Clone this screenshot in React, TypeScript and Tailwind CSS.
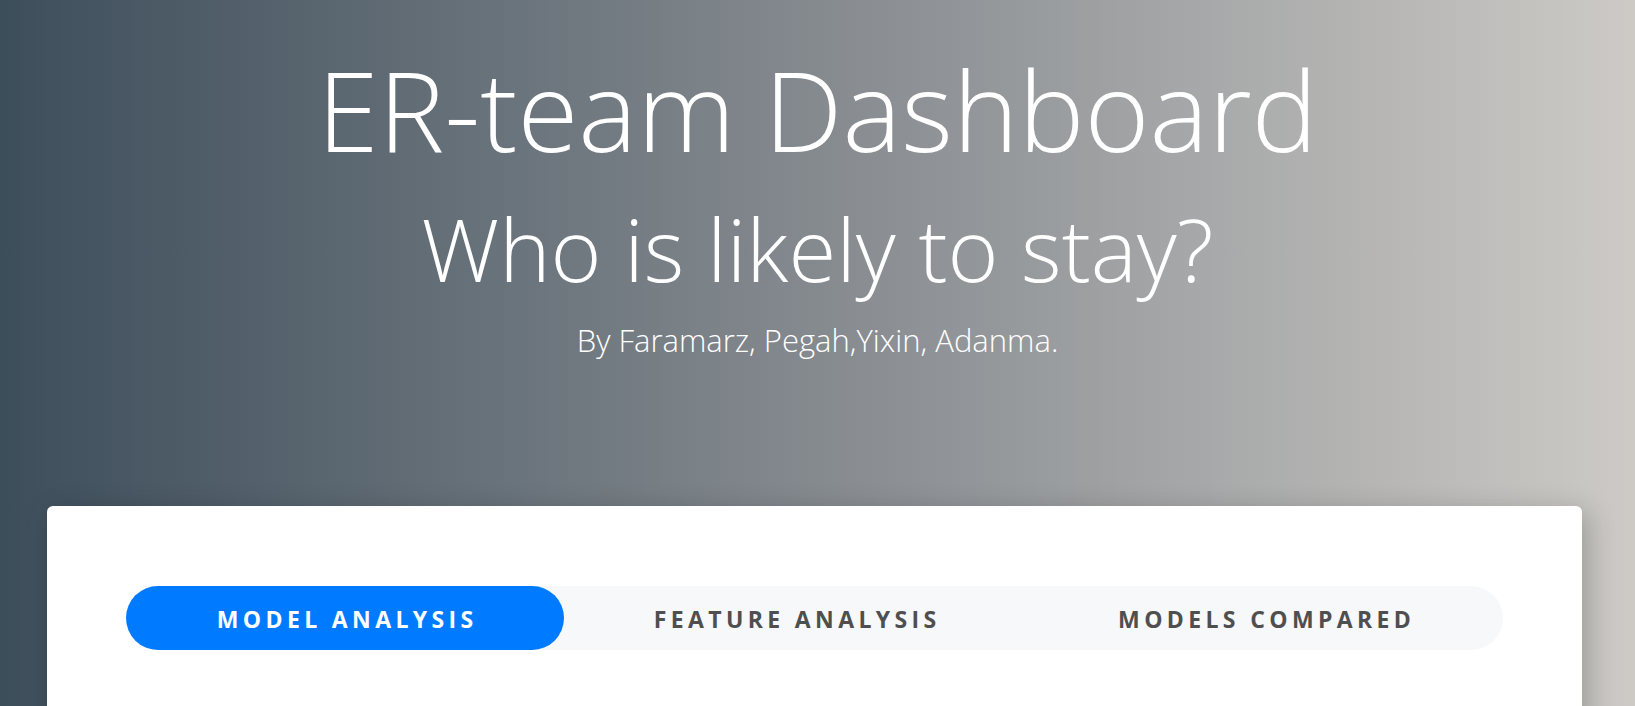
const tabs = [
  { label: 'Model Analysis', width: 'w-[438px]', active: true },
  { label: 'Feature Analysis', width: 'w-[462px]', active: false },
  { label: 'Models Compared', width: 'flex-1', active: false },
]

export default function App() {
  return (
    <div
      className="min-h-[706px] bg-[linear-gradient(to_right,#3d4e5b_0%,#858a8f_50%,#cdcac6_100%)] text-white"
      style={{ fontFamily: '"Open Sans", "Noto Sans", sans-serif' }}
    >
      <header className="flex flex-col items-center pt-[54px] text-center font-light">
        <h1 className="text-[111px] leading-[111px] font-light">ER-team Dashboard</h1>
        <h2 className="mt-[39px] text-[87px] leading-[88px] font-light">Who is likely to stay?</h2>
        <p className="mt-[28px] text-[31px] leading-[40px] font-light">By Faramarz, Pegah,Yixin, Adanma.</p>
      </header>

      <main className="mt-[146px] ml-[47px] w-[1535px] rounded-md bg-white px-[79px] pt-[80px] pb-20 shadow-[6px_6px_28px_rgba(0,0,0,0.22)]">
        <nav className="flex h-16 rounded-full bg-[#f6f8fa]">
          {tabs.map((tab) => (
            <button
              key={tab.label}
              className={`${tab.width} flex items-center justify-center rounded-full pt-[2px] pl-[0.19em] text-[23px] font-bold uppercase tracking-[0.19em] ${
                tab.active ? 'bg-[#007bff] text-white' : 'text-[#4f4f4f]'
              }`}
            >
              {tab.label}
            </button>
          ))}
        </nav>
      </main>
    </div>
  )
}
